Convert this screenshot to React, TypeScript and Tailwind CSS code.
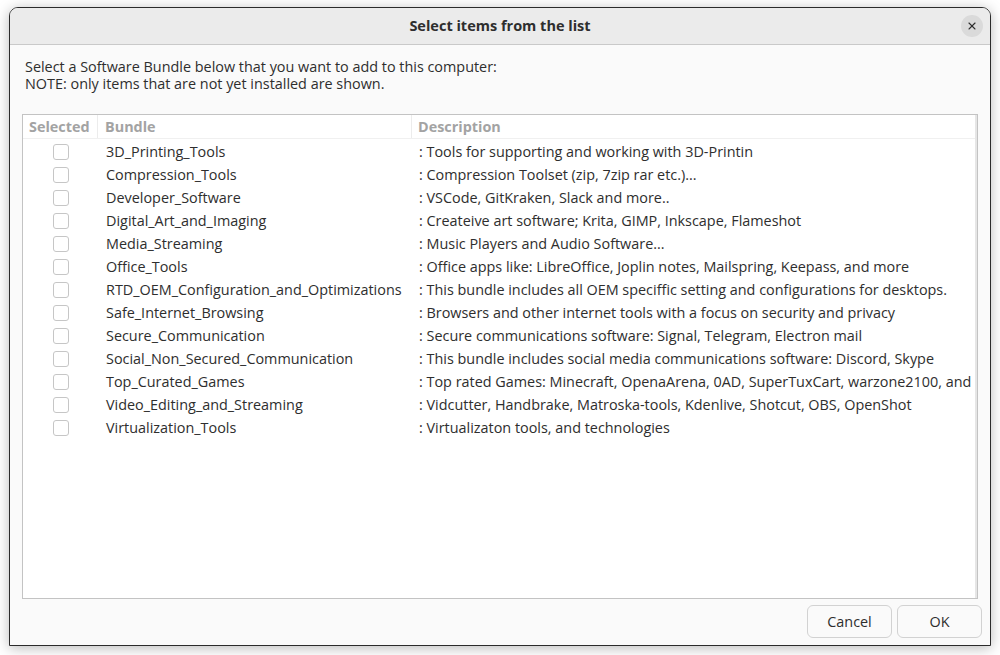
import { X } from 'lucide-react';

const bundles: [string, string][] = [
  ['3D_Printing_Tools', ': Tools for supporting and working with 3D-Printin'],
  ['Compression_Tools', ': Compression Toolset (zip, 7zip rar etc.)...'],
  ['Developer_Software', ': VSCode, GitKraken, Slack and more..'],
  ['Digital_Art_and_Imaging', ': Createive art software; Krita, GIMP, Inkscape, Flameshot'],
  ['Media_Streaming', ': Music Players and Audio Software...'],
  ['Office_Tools', ': Office apps like: LibreOffice, Joplin notes, Mailspring, Keepass, and more'],
  ['RTD_OEM_Configuration_and_Optimizations', ': This bundle includes all OEM speciffic setting and configurations for desktops.'],
  ['Safe_Internet_Browsing', ': Browsers and other internet tools with a focus on security and privacy'],
  ['Secure_Communication', ': Secure communications software: Signal, Telegram, Electron mail'],
  ['Social_Non_Secured_Communication', ': This bundle includes social media communications software: Discord, Skype'],
  ['Top_Curated_Games', ': Top rated Games: Minecraft, OpenaArena, 0AD, SuperTuxCart, warzone2100, and Steam'],
  ['Video_Editing_and_Streaming', ': Vidcutter, Handbrake, Matroska-tools, Kdenlive, Shotcut, OBS, OpenShot'],
  ['Virtualization_Tools', ': Virtualizaton tools, and technologies'],
];

const font = { fontFamily: '"Open Sans", "Noto Sans", sans-serif' };

function Row({ name, desc }: { name: string; desc: string }) {
  return (
    <div className="flex h-[23px] items-center whitespace-nowrap">
      <div className="w-[75px] shrink-0 flex justify-center">
        <span className="block w-[16px] h-[16px] rounded-[3px] border border-[#c6c6c6] bg-white" />
      </div>
      <div className="w-[314px] shrink-0 pl-[8px] text-[#2e2e2e]">{name}</div>
      <div className="shrink-0 pl-[7px] text-[#2e2e2e]">{desc}</div>
    </div>
  );
}

export default function App() {
  return (
    <div className="w-[1000px] h-[655px] bg-white pt-[7px] pl-[9px] overflow-hidden" style={font}>
      <div className="w-[982px] h-[639px] flex flex-col rounded-t-[9px] border border-[#2b2b2b] bg-[#fafafa] shadow-[0_2px_14px_rgba(0,0,0,0.28)] overflow-hidden">
        {/* Title bar */}
        <div className="relative h-[37px] shrink-0 flex items-center justify-center bg-[#ebebeb] border-b border-[#c9c9c9]">
          <span className="text-[14.5px] font-bold text-[#2e2e2e]">Select items from the list</span>
          <button className="absolute right-[7px] top-[7px] w-[22px] h-[22px] rounded-full bg-[#dadada] flex items-center justify-center">
            <X className="w-[12px] h-[12px] text-[#2e2e2e]" strokeWidth={2.2} />
          </button>
        </div>

        {/* Body */}
        <div className="flex-1 flex flex-col px-[12px] pt-[13px] pb-[7px] text-[14.4px] leading-[17px]">
          <div className="pl-[3px] text-[#2e2e2e]">
            <div>Select a Software Bundle below that you want to add to this computer:</div>
            <div>NOTE: only items that are not yet installed are shown.</div>
          </div>

          <div className="mt-[22px] flex-1 border border-[#c3c3c3] bg-white overflow-hidden relative">
            <div className="flex h-[24px] items-center whitespace-nowrap border-b border-[#f0f0f0] font-bold text-[#a3a3a3]">
              <div className="w-[75px] shrink-0 h-full flex items-center pl-[6px] border-r border-[#ececec]">Selected</div>
              <div className="w-[314px] shrink-0 h-full flex items-center pl-[7px] border-r border-[#ececec]">Bundle</div>
              <div className="shrink-0 pl-[6px]">Description</div>
            </div>
            <div className="pt-[1px]">
              {bundles.map(([n, d]) => (
                <Row key={n} name={n} desc={d} />
              ))}
            </div>
            <div className="absolute top-0 bottom-0 right-0 w-[2px] bg-[#e6e6e6]" />
          </div>

          <div className="flex justify-end gap-[5px] mt-[6px] -mr-[4px]">
            <button className="w-[85px] h-[33px] rounded-[6px] border border-[#d2d2d2] bg-[#fafafa] text-[#2e2e2e]">Cancel</button>
            <button className="w-[85px] h-[33px] rounded-[6px] border border-[#d2d2d2] bg-[#fafafa] text-[#2e2e2e]">OK</button>
          </div>
        </div>
      </div>
    </div>
  );
}
